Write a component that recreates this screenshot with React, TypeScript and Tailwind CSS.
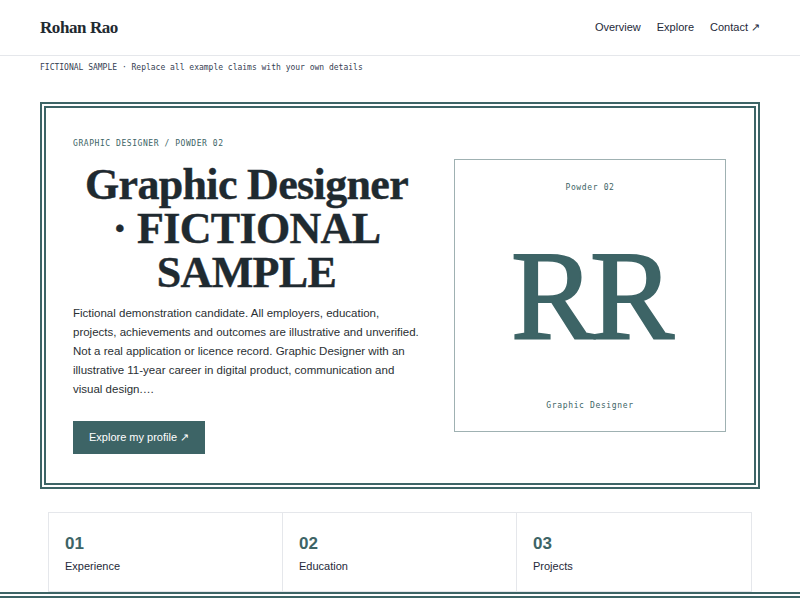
import React from "react"

const serif = { fontFamily: '"Liberation Serif", "Times New Roman", serif' }
const sans = { fontFamily: '"Liberation Sans", Arial, sans-serif' }
const mono = { fontFamily: '"DejaVu Sans Mono", "Liberation Mono", monospace' }

const stats = [
  { n: "01", label: "Experience" },
  { n: "02", label: "Education" },
  { n: "03", label: "Projects" },
]

export default function App() {
  return (
    <div className="min-h-screen bg-white text-[#1f2a30]" style={sans}>
      <header className="flex h-[56px] items-center justify-between border-b border-gray-200 px-10">
        <div className="text-[17px] font-bold tracking-tight" style={serif}>Rohan Rao</div>
        <nav className="flex gap-4 text-[11px] text-gray-800">
          <a>Overview</a>
          <a>Explore</a>
          <a>Contact ↗</a>
        </nav>
      </header>

      <p className="px-10 pt-[6px] text-[8px] leading-[12px] text-gray-700" style={mono}>
        FICTIONAL SAMPLE · Replace all example claims with your own details
      </p>

      <section className="mx-10 mt-[28px] border-[6px] border-double border-[#3d6466] px-[27px] pb-[29px] pt-[28px]">
        <div className="grid grid-cols-[347px_272px] items-center gap-[34px]">
          <div>
            <div className="mt-[2px] text-[8px] leading-[12px] tracking-[0.07em] text-[#3d6466]" style={mono}>
              GRAPHIC DESIGNER / POWDER 02
            </div>
            <h1
              className="mt-[13px] text-center text-[44px] font-bold leading-[44px] tracking-[-0.015em] [-webkit-text-stroke:0.4px_#1f2a30]"
              style={serif}
            >
              Graphic Designer
              <br />· FICTIONAL SAMPLE
            </h1>
            <p className="mt-[9px] text-[11.5px] leading-[19px] text-[#2a2f33]">
              Fictional demonstration candidate. All employers, education, projects, achievements and outcomes are
              illustrative and unverified. Not a real application or licence record. Graphic Designer with an
              illustrative 11-year career in digital product, communication and visual design.…
            </p>
            <button className="mt-[22px] h-[33px] bg-[#3d6466] px-4 text-[11px] text-white">
              Explore my profile ↗
            </button>
          </div>

          <div className="flex h-[273px] flex-col items-center justify-between border border-[#9fb1b2] pb-[19px] pt-[22px]">
            <div className="text-[8px] leading-[12px] tracking-[0.08em] text-[#3d6466]" style={mono}>Powder 02</div>
            <div
              className="text-[126px] leading-none tracking-[-0.04em] text-[#3d6466] [-webkit-text-stroke:2px_#3d6466]"
              style={serif}
            >
              RR
            </div>
            <div className="text-[8px] leading-[12px] tracking-[0.08em] text-[#3d6466]" style={mono}>Graphic Designer</div>
          </div>
        </div>
      </section>

      <div className="mx-12 mt-[23px] grid h-[80px] grid-cols-3 divide-x divide-gray-200 border border-gray-200">
        {stats.map((s) => (
          <div key={s.n} className="pl-4 pt-[21px]">
            <div className="text-[17px] font-bold leading-[20px] text-[#3d6466]">{s.n}</div>
            <div className="mt-[4px] text-[11px] leading-[16px] text-gray-800">{s.label}</div>
          </div>
        ))}
      </div>

      <footer className="h-[40px] border-t-[6px] border-double border-[#3d6466]" />
    </div>
  )
}
